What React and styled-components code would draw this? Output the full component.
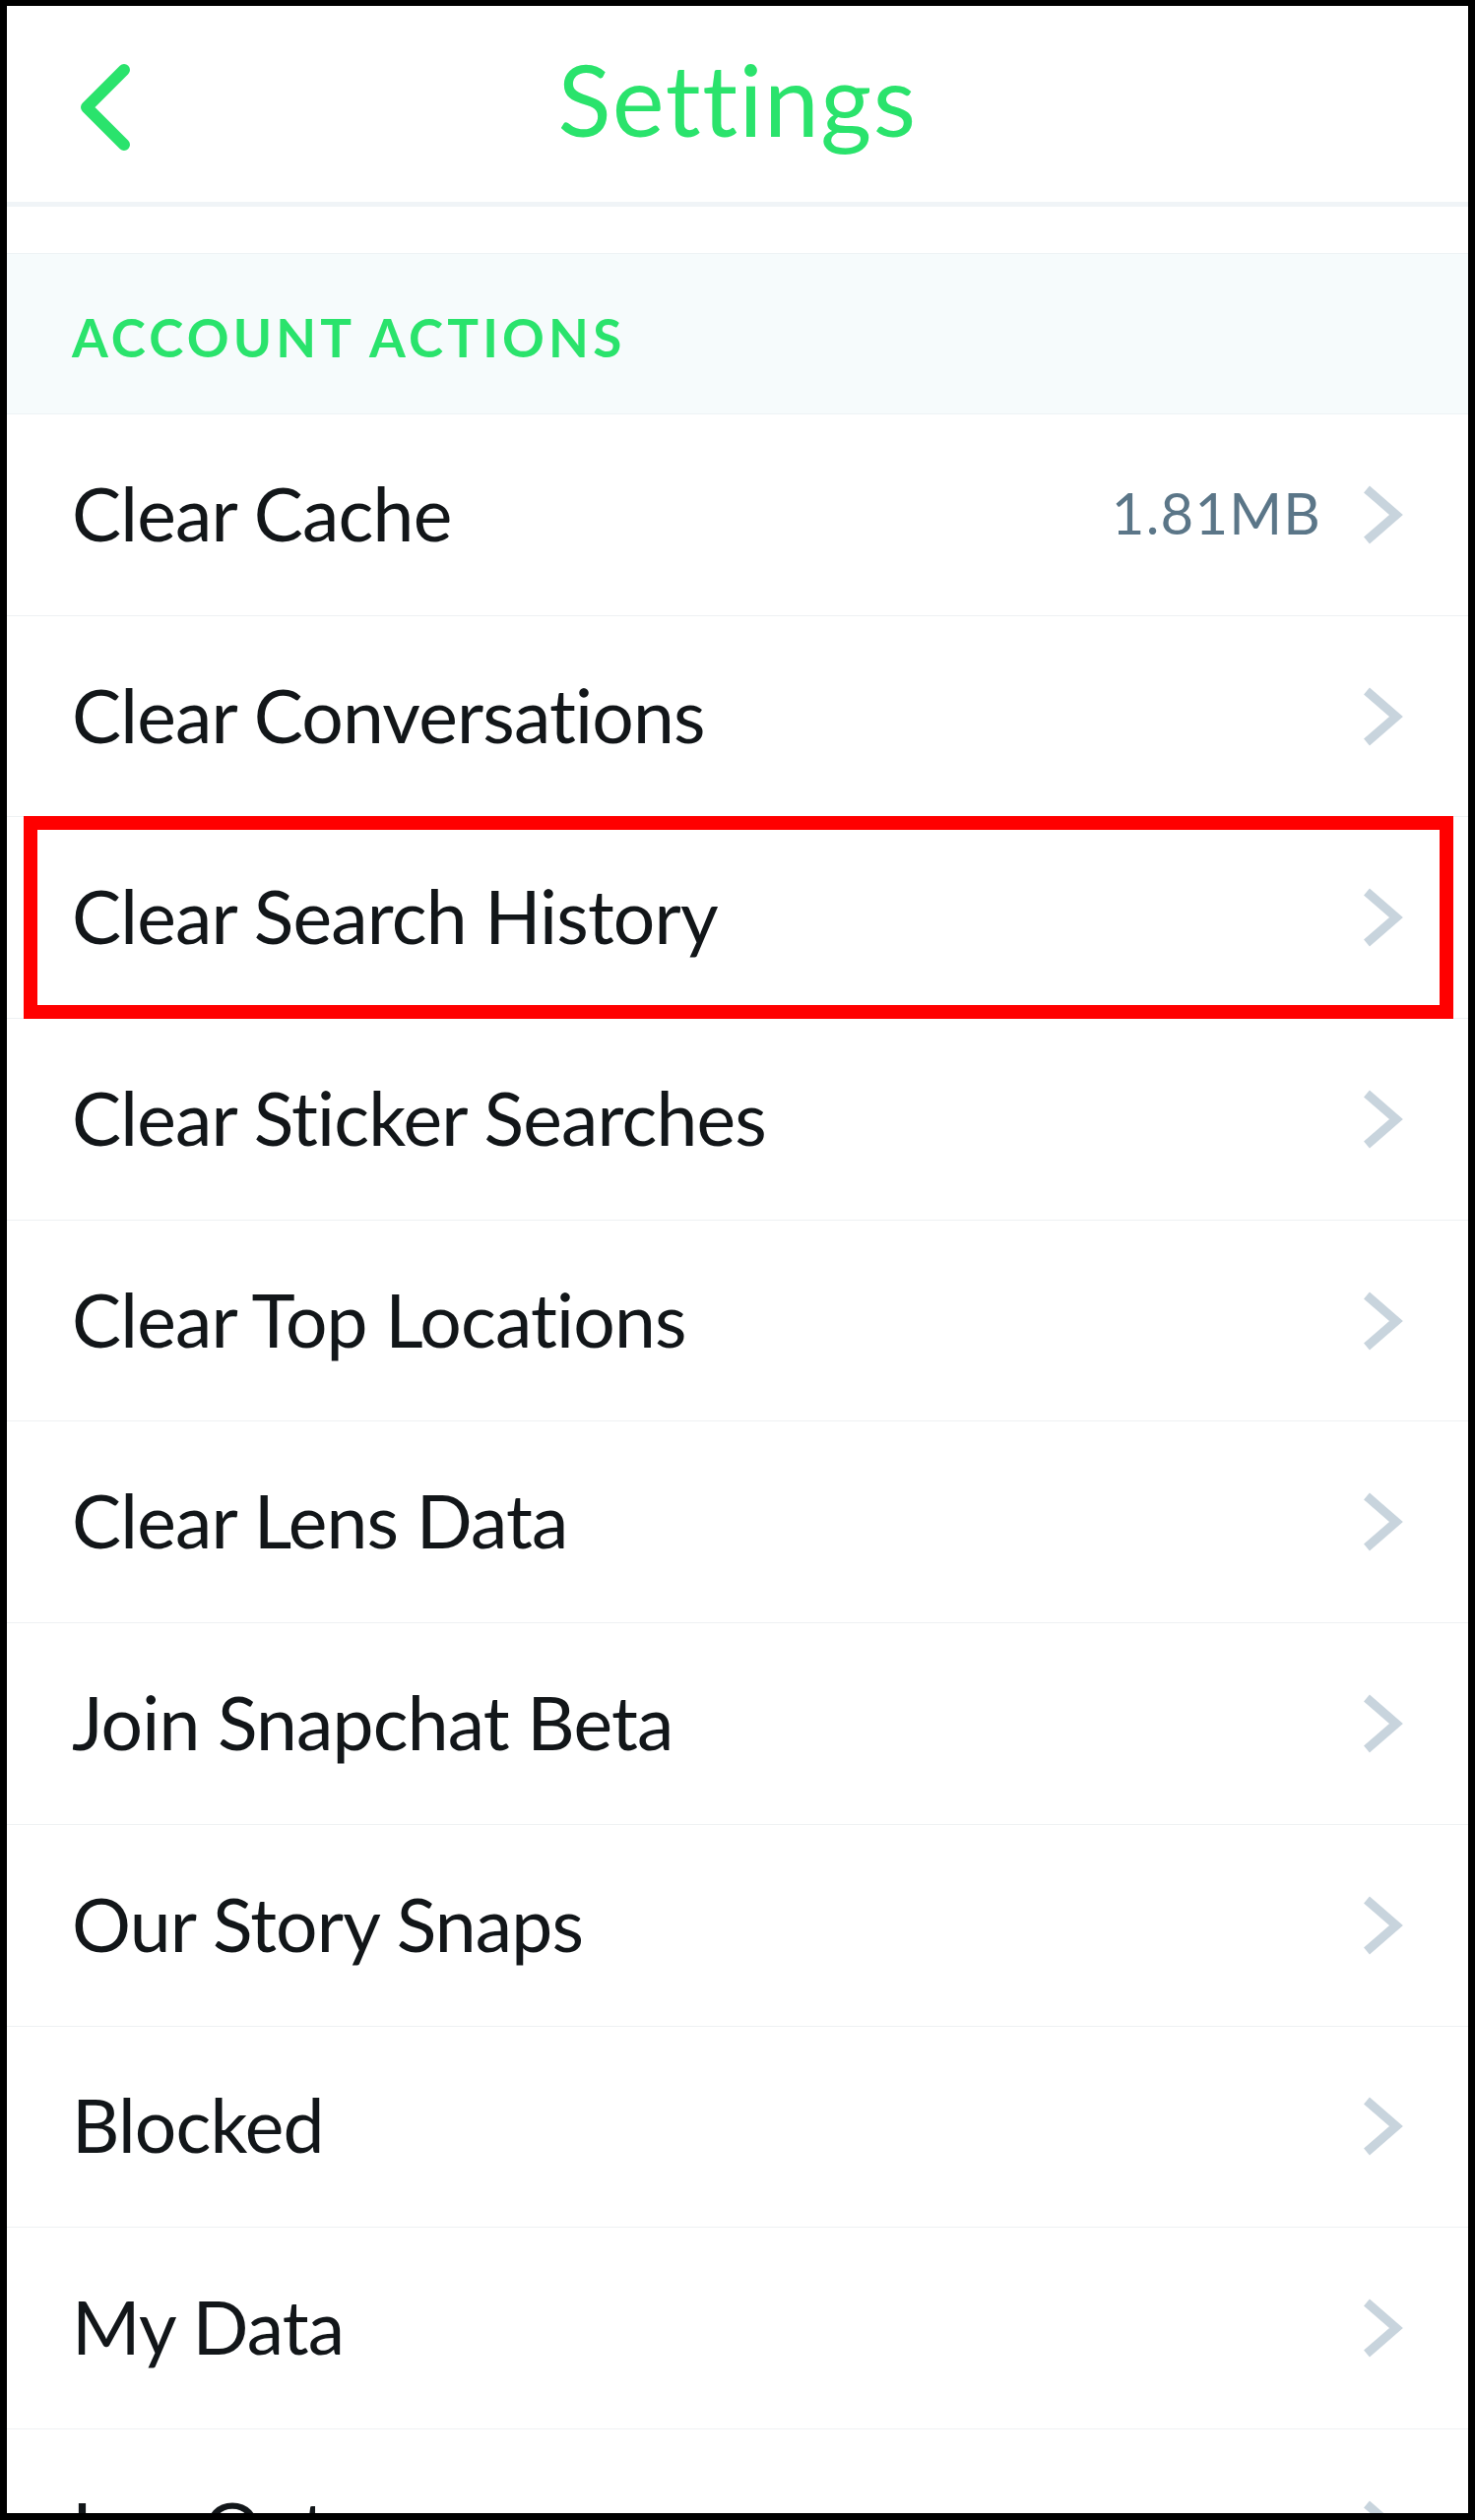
import React from 'react';
import styled, { createGlobalStyle } from 'styled-components';

const GlobalStyle = createGlobalStyle`
  html, body {
    margin: 0;
    padding: 0;
    background: #000;
  }
`;

const Frame = styled.div`
  display: flex;
  flex-direction: column;
  width: 1498px;
  height: 2560px;
  border: 7px solid #000;
  border-top-width: 6px;
  box-sizing: border-box;
  background: #fff;
  overflow: hidden;
  font-family: Lato, "Helvetica Neue", Helvetica, Arial, sans-serif;
`;

const Header = styled.header`
  position: relative;
  display: flex;
  align-items: center;
  justify-content: center;
  flex: 0 0 auto;
  height: 204px;
  border-bottom: 5px solid #f0f4f7;
  box-sizing: border-box;
`;

const BackButton = styled.div`
  position: absolute;
  left: 64px;
  top: 48px;
  width: 70px;
  height: 110px;
  display: flex;
  align-items: center;
  justify-content: center;
`;

const Title = styled.div`
  font-size: 100px;
  line-height: 1;
  letter-spacing: 1.5px;
  color: #2ae36c;
  margin-top: -12px;
`;

const Spacer = styled.div`
  flex: 0 0 auto;
  height: 47px;
`;

const SectionHeader = styled.div`
  display: flex;
  align-items: center;
  flex: 0 0 auto;
  height: 164px;
  padding: 6px 0 0 66px;
  box-sizing: border-box;
  background: #f6fbfc;
  border-top: 1px solid #eef3f5;
  border-bottom: 1px solid #eef3f5;
`;

const SectionLabel = styled.div`
  font-size: 53px;
  font-weight: 700;
  letter-spacing: 4.2px;
  color: #2ae36c;
`;

const Row = styled.div`
  position: relative;
  display: flex;
  align-items: center;
  flex: 0 0 auto;
  height: 204.7px;
  padding: 0 65px 0 66px;
  box-sizing: border-box;
  border-bottom: 1px solid #eef1f3;

  ${(p) =>
    p.$highlighted &&
    `
    &::after {
      content: '';
      position: absolute;
      top: -1px;
      bottom: -1px;
      left: 17px;
      right: 15px;
      border: 14px solid #ff0000;
    }
  `}
`;

const Label = styled.div`
  flex: 1 1 auto;
  font-size: 75px;
  letter-spacing: -0.8px;
  color: #121619;
  padding-bottom: 4px;
`;

const Value = styled.div`
  font-size: 58px;
  letter-spacing: 1.2px;
  color: #5b7688;
  margin-right: 40px;
  padding-bottom: 4px;
`;

const Chevron = () => (
  <svg width="44" height="60" viewBox="0 0 44 60">
    <polyline
      points="6,4 36,30 6,56"
      fill="none"
      stroke="#c8d4dd"
      strokeWidth="9"
      strokeLinejoin="miter"
    />
  </svg>
);

const BackIcon = () => (
  <svg width="70" height="110" viewBox="0 0 70 110">
    <polyline
      points="55,17 17,55 55,93"
      fill="none"
      stroke="#2ae36c"
      strokeWidth="12"
      strokeLinecap="round"
      strokeLinejoin="round"
    />
  </svg>
);

const rows = [
  { label: 'Clear Cache', value: '1.81MB' },
  { label: 'Clear Conversations' },
  { label: 'Clear Search History', highlighted: true },
  { label: 'Clear Sticker Searches' },
  { label: 'Clear Top Locations' },
  { label: 'Clear Lens Data' },
  { label: 'Join Snapchat Beta' },
  { label: 'Our Story Snaps' },
  { label: 'Blocked' },
  { label: 'My Data' },
  { label: 'Log Out' },
];

export default function App() {
  return (
    <>
      <GlobalStyle />
      <Frame>
        <Header>
          <BackButton>
            <BackIcon />
          </BackButton>
          <Title>Settings</Title>
        </Header>
        <Spacer />
        <SectionHeader>
          <SectionLabel>ACCOUNT ACTIONS</SectionLabel>
        </SectionHeader>
        {rows.map((r) => (
          <Row key={r.label} $highlighted={r.highlighted}>
            <Label>{r.label}</Label>
            {r.value && <Value>{r.value}</Value>}
            <Chevron />
          </Row>
        ))}
      </Frame>
    </>
  );
}
